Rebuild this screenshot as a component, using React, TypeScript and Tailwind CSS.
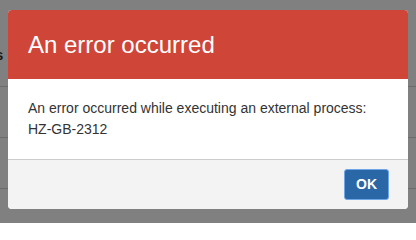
export default function App() {
  const font = { fontFamily: '"Liberation Sans", Arial, sans-serif' };
  return (
    <div className="relative w-[416px] h-[223px] overflow-hidden bg-[#808080]" style={font}>
      {/* page behind the backdrop */}
      <div className="flex flex-col">
        <div className="h-[48px]" />
        <div className="h-[38px] pl-0 -ml-[5px] text-[15px] font-bold leading-[14px] text-[#1a1a1a]">s</div>
        <div className="h-px bg-[#6b6b6b]" />
        <div className="h-[50px]" />
        <div className="h-px bg-[#6b6b6b]" />
        <div className="h-[50px]" />
        <div className="h-px bg-[#6b6b6b]" />
      </div>

      {/* modal */}
      <div className="absolute left-[8px] top-[10px] w-[400px] rounded-[4px] overflow-hidden bg-white">
        <div className="h-[69px] bg-[#cf4537] px-5 flex items-center">
          <h1 className="text-[24px] text-white font-normal leading-none">An error occurred</h1>
        </div>
        <div className="px-5 pt-[19px] pb-[19px] text-[14px] leading-[21px] text-[#333]">
          <p>An error occurred while executing an external process:</p>
          <p>HZ-GB-2312</p>
        </div>
        <div className="h-[50px] border-t border-[#cccccc] bg-[#f3f3f3] flex items-center justify-end pr-[19px]">
          <button className="w-[45px] h-[31px] rounded-[3px] border border-[#6fa6ea] bg-[#2a67a6] text-white text-[14px] font-bold">
            OK
          </button>
        </div>
      </div>
    </div>
  );
}
